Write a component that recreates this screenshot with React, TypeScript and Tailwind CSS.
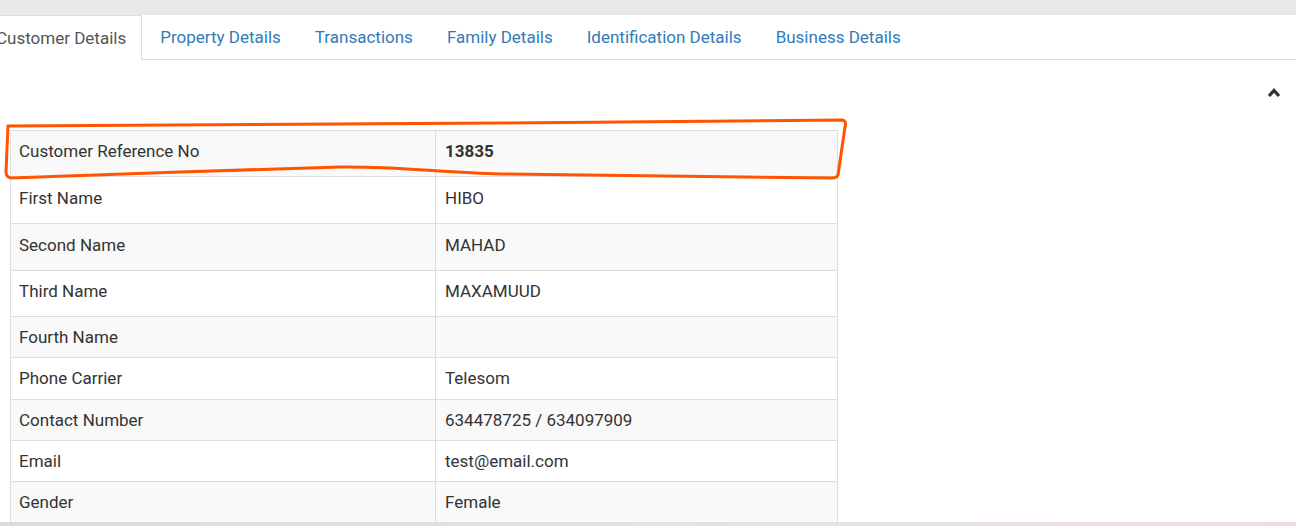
import React from "react"

const tabs = ["Customer Details", "Property Details", "Transactions", "Family Details", "Identification Details", "Business Details"]

const rows: { label: string; value: string; h: string }[] = [
  { label: "Customer Reference No", value: "13835", h: "h-[46px]" },
  { label: "First Name", value: "HIBO", h: "h-[47px]" },
  { label: "Second Name", value: "MAHAD", h: "h-[47px]" },
  { label: "Third Name", value: "MAXAMUUD", h: "h-[46px]" },
  { label: "Fourth Name", value: "", h: "h-[41px]" },
  { label: "Phone Carrier", value: "Telesom", h: "h-[42px]" },
  { label: "Contact Number", value: "634478725 / 634097909", h: "h-[41px]" },
  { label: "Email", value: "test@email.com", h: "h-[41px]" },
  { label: "Gender", value: "Female", h: "h-[41px]" },
]

const App = () => {
  return (
    <div className="relative w-[1296px] h-[526px] overflow-hidden bg-white text-[17px] text-[#333] font-['Roboto',sans-serif]">
      {/* top strip */}
      <div className="h-[15px] bg-[#e9e9e9]" />

      {/* Tabs */}
      <div className="flex h-[45px] border-b border-[#ddd]">
        {tabs.map((t, i) =>
          i === 0 ? (
            <div
              key={t}
              className="ml-[-20px] mr-[2px] -mb-px flex h-[45px] items-center border border-b-0 border-[#ddd] bg-white px-[15px] pt-[2px] text-[#555]"
            >
              {t}
            </div>
          ) : (
            <div key={t} className="mr-[2px] flex h-[44px] items-center border border-transparent px-[15px] pt-[2px] text-[#337ab7]">
              {t}
            </div>
          )
        )}
      </div>

      {/* Collapse toggle */}
      <div className="flex h-[70px] justify-end pr-[15px] pt-[27px]">
        <svg width="14" height="11" viewBox="0 0 14 11">
          <polyline points="2,9 7,3.5 12,9" fill="none" stroke="#333" strokeWidth="3.2" strokeLinejoin="miter" />
        </svg>
      </div>

      {/* Details table */}
      <div className="ml-[10px] w-[828px] border-t border-l border-[#ddd]">
        {rows.map((r, i) => (
          <div key={r.label} className={`flex ${r.h} border-b border-[#ddd] ${i % 2 === 0 ? "bg-[#f9f9f9]" : "bg-white"}`}>
            <div className={`flex w-[425px] items-center border-r border-[#ddd] px-[8px] ${i < 4 ? "pb-[3px]" : "pt-[1px]"}`}>{r.label}</div>
            <div className={`flex flex-1 items-center border-r border-[#ddd] px-[9px] ${i < 4 ? "pb-[3px]" : "pt-[1px]"} ${i === 0 ? "font-bold" : ""}`}>
              {r.value}
            </div>
          </div>
        ))}
      </div>

      {/* bottom strip */}
      <div className="absolute bottom-0 left-0 h-[4px] w-full bg-gradient-to-r from-[#dcdcdc] via-[#e6e1e4] to-[#ecdde5]" />

      {/* hand-drawn annotation */}
      <svg className="pointer-events-none absolute left-0 top-0" width="1296" height="526">
        <path
          d="M 8 126 L 500 123 L 842 120 Q 847 121 845 127 L 838 175 Q 837 178 832 178 L 500 174 C 440 172 390 166 340 167 L 180 172 L 11 178 Q 6 177 6 172 L 8 126"
          fill="none"
          stroke="#ff5500"
          strokeWidth="3"
          strokeLinejoin="round"
          strokeLinecap="round"
        />
      </svg>
    </div>
  )
}

export default App
